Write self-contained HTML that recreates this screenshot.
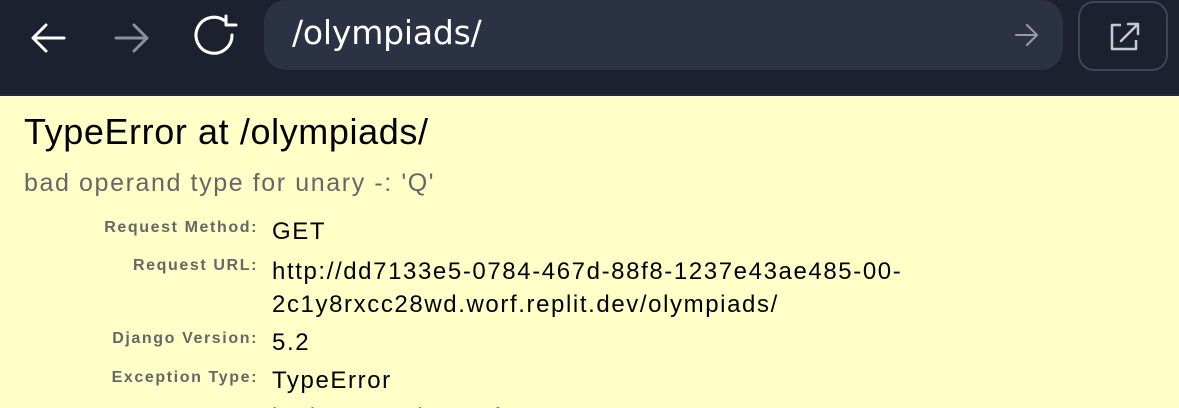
<!DOCTYPE html>
<html><head><style>
html,body{margin:0;width:1179px;height:408px;overflow:hidden;}
body{background:#ffffc8;font-family:"Liberation Sans",Arial,sans-serif;}
.wrap{position:relative;width:1179px;height:408px;overflow:hidden;}
.bar{position:absolute;left:0;top:0;width:1179px;height:94px;background:#1c2130;border-bottom:2px solid #262c3b;}
.url{position:absolute;left:264px;top:0;width:799px;height:70px;background:#2b3244;border-radius:22px;}
.url span{position:absolute;left:28px;top:13px;color:#fff;font-size:33px;font-family:"DejaVu Sans","Liberation Sans",sans-serif;letter-spacing:-0.2px;}
.btn{position:absolute;left:1078px;top:1px;width:86px;height:66px;border:2px solid #3d4559;border-radius:16px;}
svg{position:absolute;}
h1{position:absolute;left:24px;top:111px;margin:0;font-weight:normal;font-size:36px;letter-spacing:0.6px;color:#000;white-space:nowrap;}
.sub{position:absolute;left:24px;top:169px;font-size:25px;letter-spacing:1.6px;color:#666;white-space:nowrap;}
.l{position:absolute;right:921px;font-size:16px;letter-spacing:1.6px;font-weight:bold;color:#666;text-align:right;white-space:nowrap;}
.v{position:absolute;left:272px;font-size:24px;letter-spacing:1.6px;color:#000;line-height:33px;white-space:nowrap;}
</style></head><body><div class="wrap">
<div class="bar">
<svg style="left:28px;top:20px" width="40" height="36" viewBox="0 0 40 36"><path d="M36 18H6M18 5L5 18L18 31" stroke="#fff" stroke-width="3" fill="none" stroke-linecap="round" stroke-linejoin="round"/></svg>
<svg style="left:112px;top:20px" width="40" height="36" viewBox="0 0 40 36"><path d="M4 18H34M22 5L35 18L22 31" stroke="#8d8f96" stroke-width="3" fill="none" stroke-linecap="round" stroke-linejoin="round"/></svg>
<svg style="left:192px;top:13px" width="50" height="46" viewBox="0 0 50 46"><path d="M40 22A18 18 0 1 1 33 8" stroke="#fff" stroke-width="3" fill="none" stroke-linecap="round"/><path d="M34 3V12H44" stroke="#fff" stroke-width="3" fill="none" stroke-linecap="round" stroke-linejoin="round"/></svg>
<div class="url"><span>/olympiads/</span>
<svg style="left:750px;top:23px" width="26" height="24" viewBox="0 0 26 24"><path d="M2 12H23M13 2L23 12L13 22" stroke="#9a9ca3" stroke-width="2" fill="none" stroke-linecap="round" stroke-linejoin="round"/></svg></div>
<div class="btn"><svg style="left:29px;top:18px" width="32" height="32" viewBox="0 0 32 32"><path d="M12 4H3V28H27V19" stroke="#c8c9cd" stroke-width="2.5" fill="none" stroke-linejoin="round"/><path d="M12 20L28 4M19 3H29V13" stroke="#c8c9cd" stroke-width="2.5" fill="none" stroke-linecap="round" stroke-linejoin="round"/></svg></div>
</div>
<h1>TypeError at /olympiads/</h1>
<div class="sub">bad operand type for unary -: 'Q'</div>
<div class="l" style="top:219px">Request Method:</div><div class="v" style="top:215px">GET</div>
<div class="l" style="top:257px">Request URL:</div><div class="v" style="top:255px">http://dd7133e5-0784-467d-88f8-1237e43ae485-00-<br>2c1y8rxcc28wd.worf.replit.dev/olympiads/</div>
<div class="l" style="top:330px">Django Version:</div><div class="v" style="top:326px">5.2</div>
<div class="l" style="top:369px">Exception Type:</div><div class="v" style="top:364px">TypeError</div>
<div class="v" style="top:401px;height:7px;overflow:hidden;">bad operand type for unary -: 'Q'</div>
</div></body></html>
